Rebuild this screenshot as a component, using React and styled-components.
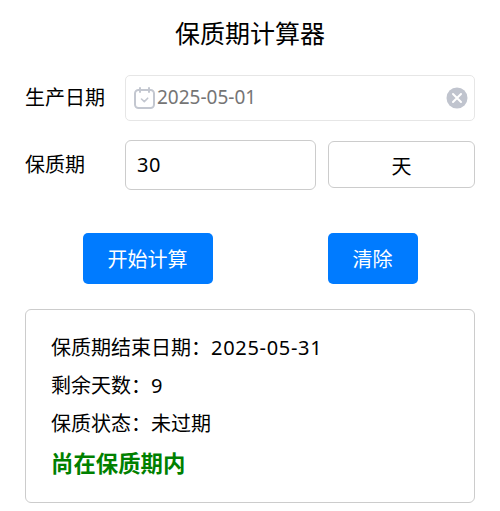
import React from "react";
import styled, { createGlobalStyle } from "styled-components";

const GlobalStyle = createGlobalStyle`
  html, body {
    margin: 0;
    padding: 0;
    background: #fff;
    font-family: "Noto Sans", "Noto Sans CJK SC", sans-serif;
    color: #000;
  }
  * { box-sizing: border-box; }
`;

function CalendarIcon() {
  return (
    <svg width="21" height="22" viewBox="0 0 21 22" fill="none" stroke="#c3c7d0" strokeWidth="2">
      <rect x="1" y="3" width="19" height="18" rx="3.5" />
      <path d="M6 1v4M15 1v4" strokeLinecap="round" />
      <path d="M7.5 12l2.8 2.6 3.4-3.4" strokeWidth="1.6" strokeLinecap="round" strokeLinejoin="round" />
    </svg>
  );
}

function ClearIcon() {
  return (
    <svg width="22" height="22" viewBox="0 0 22 22">
      <circle cx="11" cy="11" r="10.5" fill="#c0c4ce" />
      <path d="M7 7l8 8M15 7l-8 8" stroke="#fff" strokeWidth="2" strokeLinecap="round" />
    </svg>
  );
}

export default function App() {
  return (
    <>
      <GlobalStyle />
      <Page>
        <Title>保质期计算器</Title>
        <DateRow>
          <Label>生产日期</Label>
          <DateField>
            <CalendarIcon />
            <DateValue>2025-05-01</DateValue>
            <ClearIcon />
          </DateField>
        </DateRow>
        <ShelfRow>
          <Label>保质期</Label>
          <NumberInput defaultValue="30" />
          <UnitSelect>天</UnitSelect>
        </ShelfRow>
        <Buttons>
          <Button>开始计算</Button>
          <Button>清除</Button>
        </Buttons>
        <Result>
          <ResultLine>保质期结束日期：<Digits>2025-05-31</Digits></ResultLine>
          <ResultLine>剩余天数：9</ResultLine>
          <ResultLine>保质状态：未过期</ResultLine>
          <Status>尚在保质期内</Status>
        </Result>
      </Page>
    </>
  );
}

const Page = styled.div`
  width: 500px;
  height: 511px;
  padding: 15px 25px 0;
  overflow: hidden;
`;

const Title = styled.h1`
  margin: 0 0 24px;
  height: 36px;
  line-height: 36px;
  font-size: 25px;
  font-weight: 400;
  text-align: center;
`;

const DateRow = styled.div`
  display: flex;
  align-items: center;
  margin-bottom: 19px;
`;

const ShelfRow = styled.div`
  display: flex;
  align-items: center;
  margin-bottom: 43px;
`;

const Label = styled.label`
  width: 100px;
  flex: none;
  font-size: 20px;
  line-height: 28px;
`;

const DateField = styled.div`
  flex: 1;
  height: 46px;
  display: flex;
  align-items: center;
  gap: 2px;
  padding: 0 6px 0 8px;
  border: 1px solid #e6e6e6;
  border-radius: 5px;
`;

const DateValue = styled.span`
  flex: 1;
  font-size: 19px;
  line-height: 42px;
  padding-bottom: 2px;
  color: #757575;
`;

const NumberInput = styled.input`
  width: 191px;
  height: 50px;
  padding: 0 11px 2px;
  border: 1px solid #ccc;
  border-radius: 6px;
  font-family: inherit;
  font-size: 20px;
  letter-spacing: 0.5px;
  color: #000;
  outline: none;
`;

const UnitSelect = styled.div`
  width: 147px;
  height: 47px;
  margin: 0 0 2px 12px;
  padding-top: 1px;
  align-self: flex-end;
  display: flex;
  align-items: center;
  justify-content: center;
  border: 1px solid #ccc;
  border-radius: 6px;
  font-size: 20px;
`;

const Buttons = styled.div`
  display: flex;
  justify-content: space-around;
  margin-bottom: 25px;
`;

const Button = styled.button`
  height: 51px;
  padding: 0 25px;
  border: none;
  border-radius: 5px;
  background: #007bff;
  color: #fff;
  font-family: inherit;
  font-size: 20px;
`;

const Result = styled.div`
  height: 194px;
  padding: 24px 25px 0;
  border: 1px solid #ccc;
  border-radius: 6px;
`;

const ResultLine = styled.p`
  margin: 0 0 10px;
  font-size: 20px;
  line-height: 28px;
`;

const Digits = styled.span`
  letter-spacing: 0.7px;
`;

const Status = styled.p`
  margin: 0;
  font-size: 22.4px;
  font-weight: 700;
  line-height: 32px;
  color: green;
`;
